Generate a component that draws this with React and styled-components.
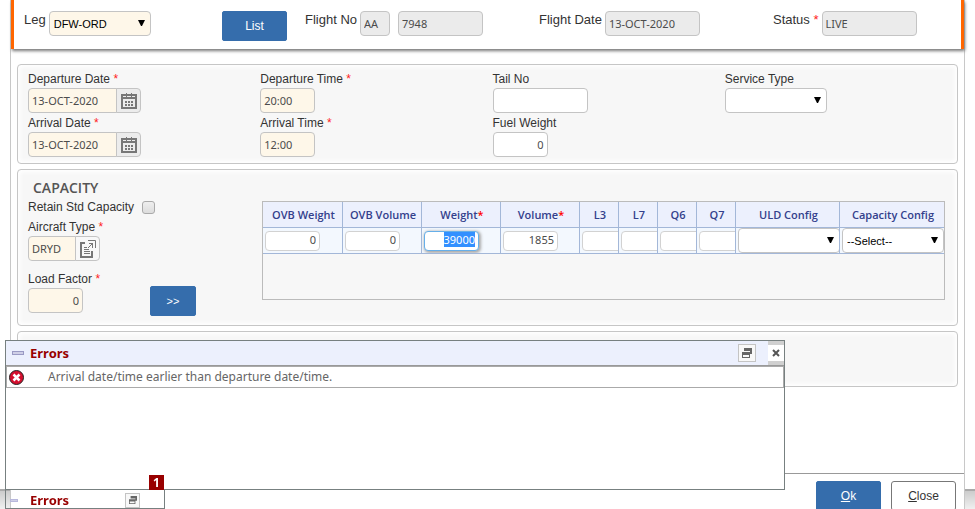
import React, { useEffect, useRef } from "react";
import styled, { createGlobalStyle, css } from "styled-components";

const GlobalStyle = createGlobalStyle`
  *, *::before, *::after { box-sizing: border-box; }
  html { overflow: hidden; }
  body {
    margin: 0;
    background: #fff;
    color: #333;
    font: 12px/18px "Liberation Sans", Arial, sans-serif;
  }
  button, input, select { margin: 0; font: inherit; }
`;

const uiFont = '"Noto Sans", Tahoma, sans-serif';
const headingFont = '"Open Sans", "Noto Sans", sans-serif';

const Page = styled.div`
  min-height: 100vh;
  padding: 0 10px;
  background: linear-gradient(#aaa 2px, #ccc 2px, #f4f4f4 22px) left bottom / 100% 22px no-repeat;
  background-color: #fff;
`;

const Panel = styled.div`
  background: #fff;
  border: solid #c8c8c8;
  border-width: 0 1px;
`;

const FlightBar = styled.header`
  display: grid;
  grid-template-columns: 198fr 83fr 234fr 234fr 188fr;
  align-items: start;
  padding: 11px 0 8px 10px;
  border: solid #ff6600;
  border-width: 0 3px;
  box-shadow: 1px 2px 3px 0 #777;
`;

const BarField = styled.div`
  display: flex;
  gap: 3px;
  font-size: 13px;
`;

const PairGap = styled.div`
  display: flex;
  gap: 8px;
`;

const Star = styled.span`
  color: #f22;
`;

const Main = styled.main`
  display: flex;
  flex-direction: column;
  gap: 5px;
  padding: 15px 6px 86px;
`;

const Section = styled.section`
  padding: 5px 0 6px 10px;
  border: 1px solid #c6c6c6;
  border-radius: 4px;
  background: #f7f7f7;
  box-shadow: inset 0 0 4px 2px #fff;
`;

const EmptySection = styled(Section)`
  min-height: 56px;
`;

const FieldGrid = styled.div`
  display: grid;
  grid-template-columns: repeat(4, 1fr);
  row-gap: 1px;
`;

const FieldBox = styled.div`
  display: flex;
  flex-direction: column;
  align-items: flex-start;
  white-space: nowrap;
`;

const control = css`
  height: ${(p) => (p.$small ? 20 : 25)}px;
  width: ${(p) => p.$w}px;
  border: 1px solid #c4c4c4;
  border-radius: 4px;
  background: ${(p) => (p.$required ? "#fef7e9" : "#fff")};
  color: #4c4c4c;
  outline: none;
`;

const TextInput = styled.input`
  ${control}
  padding: 0 3px 1px;
  font: 11px/16px ${uiFont};
  text-align: ${(p) => (p.$right ? "right" : "left")};
  &[readonly] { background: #ebebeb; }
  &::selection { background: #3390ff; color: #fff; }
`;

const GridInput = styled(TextInput)`
  display: block;
  padding-bottom: 2px;
  border-color: #d2d2d2;
  &:focus {
    border-color: #66afe9;
    box-shadow: 1px 1px 3px 1px #aaa;
  }
`;

const SelectWrap = styled.span`
  position: relative;
  display: block;
  width: ${(p) => p.$w}px;
  svg {
    position: absolute;
    right: 6px;
    top: 9px;
    pointer-events: none;
  }
`;

const NativeSelect = styled.select`
  ${control}
  appearance: none;
  padding: 0 16px 0 4px;
  color: #000;
  font-size: 11px;
`;

const Joined = styled.div`
  display: flex;
  ${TextInput} { border-radius: 4px 0 0 4px; }
`;

const IconButton = styled.button`
  display: grid;
  place-items: center;
  width: 25px;
  height: 25px;
  margin-left: -1px;
  padding: 0;
  border: 1px solid #c4c4c4;
  border-radius: 0 4px 4px 0;
  background: ${(p) => (p.$plain ? "#f8f8f8" : "#ececec")};
`;

const ActionButton = styled.button`
  width: ${(p) => p.$w || 65}px;
  height: 30px;
  padding: 0;
  border: 1px solid ${(p) => (p.$outline ? "#777" : "#356dac")};
  border-radius: ${(p) => (p.$outline ? 3 : 2)}px;
  background: ${(p) => (p.$outline ? "#fff" : "#356dac")};
  color: ${(p) => (p.$outline ? "#333" : "#fff")};
  font-size: ${(p) => (p.$w ? 11 : 12)}px;
`;

const CapacityLayout = styled.div`
  display: grid;
  grid-template-columns: 234px 1fr;
  padding-right: 12px;
`;

const CapacityFields = styled.div`
  display: flex;
  flex-direction: column;
`;

const SectionTitle = styled.h2`
  margin: 3px 0 0 5px;
  color: #555;
  font: 600 14px/20px ${headingFont};
`;

const CheckRow = styled.div`
  display: flex;
  align-items: center;
  gap: 8px;
  height: 18px;
`;

const CheckBox = styled.input`
  appearance: none;
  width: 13px;
  height: 13px;
  border: 1px solid #aaa;
  border-radius: 3px;
  background: linear-gradient(#eee, #ddd);
`;

const FieldsBody = styled.div`
  display: flex;
  flex-direction: column;
  gap: 2px;
`;

const LoadRow = styled.div`
  display: flex;
  align-items: flex-end;
  gap: 50px;
  padding: 7px 0 0;
  margin-bottom: 3px;
`;

const LoadField = styled(FieldBox)`
  width: 72px;
  padding-bottom: 3px;
`;

const TableFrame = styled.div`
  height: 99px;
  margin-top: 26px;
  border: 1px solid #bbb;
`;

const Table = styled.table`
  width: 100%;
  table-layout: fixed;
  border-collapse: separate;
  border-spacing: 0;
`;

const HeadCell = styled.th`
  width: ${(p) => p.$w}px;
  height: 26px;
  padding: 0 0 0 2px;
  border: solid #a3b7d8;
  border-width: 0 1px 1px 0;
  background: #ecf0fd;
  color: #33408c;
  font: 600 11px/18px ${headingFont};
  white-space: nowrap;
  &:last-child { border-right: 0; }
  ${Star} { color: #f00; }
`;

const Cell = styled.td`
  height: 26px;
  padding: 0 0 0 2px;
  border: solid #a3b7d8;
  border-width: 0 1px 1px 0;
  background: #f3f8fe;
  overflow: hidden;
  &:last-child { border-right: 0; }
`;

const Footer = styled.footer`
  display: flex;
  justify-content: flex-end;
  gap: 10px;
  padding: 7px 8px 0;
  border-top: 1px solid #999;
`;

const Dock = styled.div`
  position: fixed;
  left: 5px;
  bottom: 0;
  width: 80%;
`;

const ErrorDialog = styled.section`
  min-height: 150px;
  border: 1px solid #778080;
  background: #fff;
`;

const DialogHeader = styled.div`
  display: flex;
  align-items: center;
  height: 25px;
  padding-left: 6px;
  border-bottom: 1px solid #999;
  background: #ecf0fd;
`;

const ErrorTitle = styled.h2`
  flex: 1;
  margin: 0 0 0 6px;
  color: #980000;
  font: 700 13px/20px ${uiFont};
`;

const Dash = styled.span`
  width: 12px;
  height: 4px;
  border: 1px solid #9a9ac4;
  background: #cfcfe6;
`;

const RestoreButton = styled.button`
  display: grid;
  place-items: center;
  width: ${(p) => p.$size}px;
  height: ${(p) => p.$size}px;
  padding: 0;
  border: 1px solid #c4c4c4;
  background: #f8f8f8;
`;

const CloseButton = styled.button`
  display: grid;
  place-items: center;
  align-self: stretch;
  width: 16px;
  margin-left: 12px;
  padding: 0;
  border: solid #d0d0d0;
  border-width: 4px 0;
  background: #fff;
`;

const Message = styled.div`
  display: flex;
  align-items: center;
  gap: 24px;
  height: 22px;
  padding-left: 2px;
  border: 1px solid #aaa;
  color: #666;
  font: 12px/22px ${uiFont};
`;

const Tray = styled.div`
  position: relative;
  display: flex;
  align-items: center;
  width: 160px;
  height: 20px;
  margin-top: -1px;
  padding: 2px 24px 0 4px;
  border: 1px solid #778080;
  ${Dash} { width: 8px; height: 3px; margin-right: 6px; border-color: #b8b8dc; }
`;

const Badge = styled.span`
  position: absolute;
  top: -15px;
  right: 0;
  width: 15px;
  height: 15px;
  background: #980000;
  color: #fff;
  font: 700 12px/15px ${uiFont};
  text-align: center;
`;

const Caret = () => (
  <svg width="7" height="6" viewBox="0 0 7 6" aria-hidden="true">
    <path d="M0 0h7L4 6H3z" fill="#000" />
  </svg>
);

const CalendarIcon = () => (
  <svg width="16" height="16" viewBox="0 0 16 16" shapeRendering="crispEdges" aria-hidden="true">
    <path fill="#777" fillRule="evenodd" d="M0 1h16v15H0zM2 6v8h12V6z" />
    <path fill="#ececec" d="M2 3h12v1H2z" />
    <path fill="#777" d="M5 0h1v4H5zM10 0h1v4h-1z" />
    <path fill="#777" d="M4 8h2v2H4zm3 0h2v2H7zm3 0h2v2h-2zM4 11h2v2H4zm3 0h2v2H7zm3 0h2v2h-2z" />
  </svg>
);

const LookupIcon = () => (
  <svg width="17" height="18" viewBox="0 0 17 18" aria-hidden="true">
    <path d="M6 3H2v14h11V11" fill="none" stroke="#777" strokeWidth="2" />
    <path d="M5 7.500h3M5 9.500h5M5 11.500h6M5 13.500h6" stroke="#777" />
    <path d="M9 .5h7.500V8M10 3.500h3.500V8M9 8l5-5" fill="none" stroke="#777" />
  </svg>
);

const WindowsIcon = ({ size = 10 }) => (
  <svg width={size} height={size} viewBox="0 0 10 10" aria-hidden="true">
    <path fill="#666" fillRule="evenodd" d="M2 0h8v6H8V3H2zM0 4h8v6H0zm1 3v2h6V7z" />
  </svg>
);

const CrossIcon = () => (
  <svg width="8" height="8" viewBox="0 0 8 8" aria-hidden="true">
    <path d="M1 1l6 6M7 1L1 7" stroke="#555" strokeWidth="2" />
  </svg>
);

const ErrorIcon = () => (
  <svg width="15" height="15" viewBox="0 0 15 15" aria-hidden="true">
    <circle cx="7.500" cy="7.500" r="7" fill="#d40f2e" stroke="#222" />
    <path d="M4.500 4.500l6 6M10.500 4.500l-6 6" stroke="#fff" strokeWidth="2.500" />
  </svg>
);

const Select = ({ w, id, required, label, children }) => (
  <SelectWrap $w={w}>
    <NativeSelect $w={w} id={id} $required={required} aria-label={label}>
      <option>{children}</option>
    </NativeSelect>
    <Caret />
  </SelectWrap>
);

const Field = ({ id, label, required, children }) => (
  <FieldBox>
    <label htmlFor={id}>
      {label}
      {required && <Star> *</Star>}
    </label>
    {children}
  </FieldBox>
);

const DateInput = ({ id, value }) => (
  <Joined>
    <TextInput id={id} $w={89} $required defaultValue={value} />
    <IconButton type="button" aria-label="Open calendar">
      <CalendarIcon />
    </IconButton>
  </Joined>
);

const columns = [
  { name: "OVB Weight", w: 80, value: "0" },
  { name: "OVB Volume", w: 79, value: "0" },
  { name: "Weight", w: 79, value: "39000", required: true },
  { name: "Volume", w: 79, value: "1855", required: true },
  { name: "L3", w: 39, value: "" },
  { name: "L7", w: 39, value: "" },
  { name: "Q6", w: 39, value: "" },
  { name: "Q7", w: 39, value: "" },
  { name: "ULD Config", w: 104, select: true, value: "" },
  { name: "Capacity Config", w: 104, select: true, value: "--Select--" },
];

const CapacityTable = () => {
  const weight = useRef(null);
  useEffect(() => {
    weight.current.focus({ preventScroll: true });
    weight.current.select();
  }, []);
  return (
    <TableFrame>
      <Table>
        <thead>
          <tr>
            {columns.map((c) => (
              <HeadCell key={c.name} $w={c.w} scope="col">
                {c.name}
                {c.required && <Star>*</Star>}
              </HeadCell>
            ))}
          </tr>
        </thead>
        <tbody>
          <tr>
            {columns.map((c) => (
              <Cell key={c.name}>
                {c.select ? (
                  <Select w={102} label={c.name}>{c.value}</Select>
                ) : (
                  <GridInput
                    ref={c.name === "Weight" ? weight : null}
                    $w={55}
                    $small
                    $right
                    aria-label={c.name}
                    defaultValue={c.value}
                  />
                )}
              </Cell>
            ))}
          </tr>
        </tbody>
      </Table>
    </TableFrame>
  );
};

export default function App() {
  return (
    <>
      <GlobalStyle />
      <Page>
        <Panel>
          <FlightBar>
            <BarField>
              <label htmlFor="leg">Leg</label>
              <Select w={102} id="leg" required>DFW-ORD</Select>
            </BarField>
            <ActionButton type="button">List</ActionButton>
            <BarField>
              <label htmlFor="carrier">Flight No</label>
              <PairGap>
                <TextInput id="carrier" $w={30} readOnly value="AA" />
                <TextInput $w={85} readOnly aria-label="Flight number" value="7948" />
              </PairGap>
            </BarField>
            <BarField>
              <label htmlFor="flight-date">Flight Date</label>
              <TextInput id="flight-date" $w={95} readOnly value="13-OCT-2020" />
            </BarField>
            <BarField>
              <label htmlFor="status">Status<Star> *</Star></label>
              <TextInput id="status" $w={95} readOnly value="LIVE" />
            </BarField>
          </FlightBar>

          <Main>
            <Section>
              <FieldGrid>
                <Field id="dep-date" label="Departure Date" required>
                  <DateInput id="dep-date" value="13-OCT-2020" />
                </Field>
                <Field id="dep-time" label="Departure Time" required>
                  <TextInput id="dep-time" $w={55} $required defaultValue="20:00" />
                </Field>
                <Field id="tail" label="Tail No">
                  <TextInput id="tail" $w={95} />
                </Field>
                <Field id="service" label="Service Type">
                  <Select id="service" w={102} />
                </Field>
                <Field id="arr-date" label="Arrival Date" required>
                  <DateInput id="arr-date" value="13-OCT-2020" />
                </Field>
                <Field id="arr-time" label="Arrival Time" required>
                  <TextInput id="arr-time" $w={55} $required defaultValue="12:00" />
                </Field>
                <Field id="fuel" label="Fuel Weight">
                  <TextInput id="fuel" $w={55} $right defaultValue="0" />
                </Field>
              </FieldGrid>
            </Section>

            <Section>
              <CapacityLayout>
                <CapacityFields>
                  <SectionTitle>CAPACITY</SectionTitle>
                  <FieldsBody>
                    <CheckRow>
                      <label htmlFor="retain">Retain Std Capacity</label>
                      <CheckBox id="retain" type="checkbox" />
                    </CheckRow>
                    <Field id="aircraft" label="Aircraft Type" required>
                      <Joined>
                        <TextInput id="aircraft" $w={48} $required defaultValue="DRYD" />
                        <IconButton type="button" $plain aria-label="Look up aircraft type">
                          <LookupIcon />
                        </IconButton>
                      </Joined>
                    </Field>
                    <LoadRow>
                      <LoadField>
                        <label htmlFor="load">Load Factor<Star> *</Star></label>
                        <TextInput id="load" $w={55} $required $right defaultValue="0" />
                      </LoadField>
                      <ActionButton type="button" $w={46}>&gt;&gt;</ActionButton>
                    </LoadRow>
                  </FieldsBody>
                </CapacityFields>
                <CapacityTable />
              </CapacityLayout>
            </Section>

            <EmptySection />
          </Main>

          <Footer>
            <ActionButton type="button"><u>O</u>k</ActionButton>
            <ActionButton type="button" $outline><u>C</u>lose</ActionButton>
          </Footer>
        </Panel>
      </Page>

      <Dock>
        <ErrorDialog role="dialog" aria-label="Errors">
          <DialogHeader>
            <Dash />
            <ErrorTitle>Errors</ErrorTitle>
            <RestoreButton type="button" $size={18} aria-label="Restore">
              <WindowsIcon />
            </RestoreButton>
            <CloseButton type="button" aria-label="Dismiss">
              <CrossIcon />
            </CloseButton>
          </DialogHeader>
          <Message>
            <ErrorIcon />
            Arrival date/time earlier than departure date/time.
          </Message>
        </ErrorDialog>
        <Tray>
          <Dash />
          <ErrorTitle>Errors</ErrorTitle>
          <RestoreButton type="button" $size={15} aria-label="Open errors">
            <WindowsIcon size={8} />
          </RestoreButton>
          <Badge>1</Badge>
        </Tray>
      </Dock>
    </>
  );
}
